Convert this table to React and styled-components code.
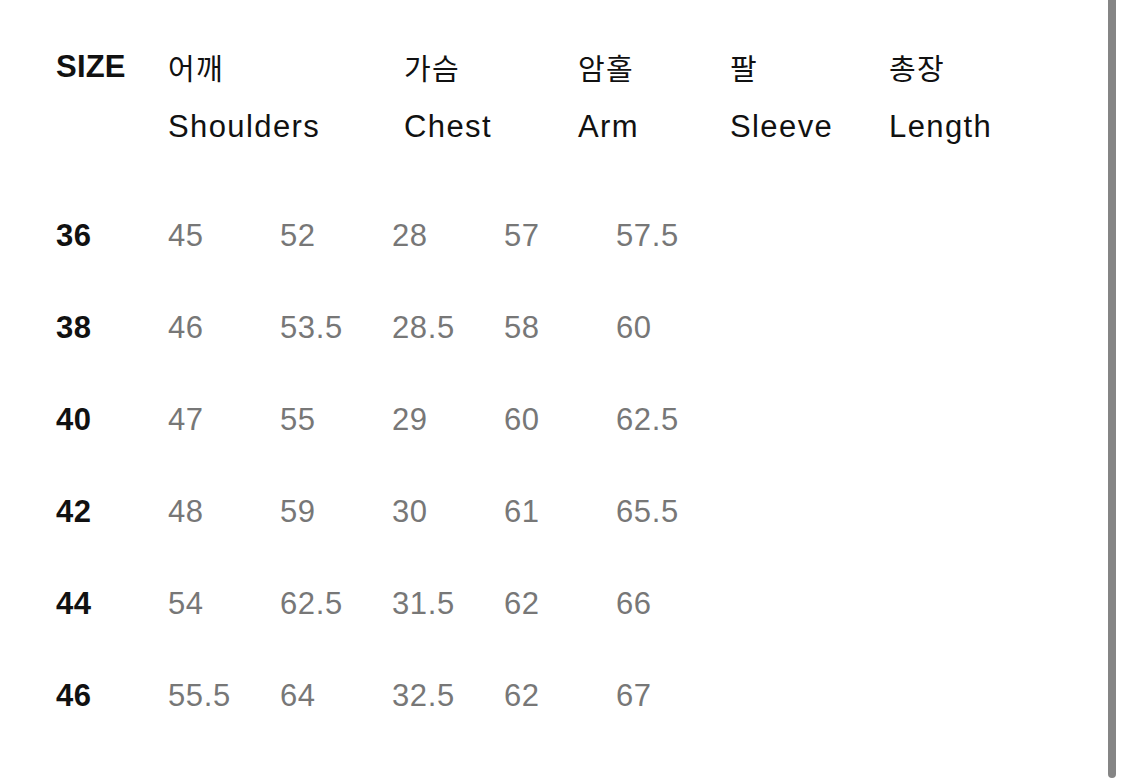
import React from "react";
import styled, { createGlobalStyle } from "styled-components";

const GlobalStyle = createGlobalStyle`
  body {
    margin: 0;
    background: #ffffff;
    font-family: "Liberation Sans", "Noto Sans CJK KR", sans-serif;
  }
`;

const Page = styled.div`
  position: relative;
  width: 1125px;
  height: 784px;
  overflow: hidden;
  padding-left: 56px;
  box-sizing: border-box;
`;

const Header = styled.div`
  display: grid;
  grid-template-columns: 112px 236px 174px 152px 159px auto;
  grid-auto-rows: 60px;
  padding-top: 37px;
  align-items: center;
  color: #111;
`;

const HeadCell = styled.div`
  line-height: 60px;
  white-space: nowrap;
  font-weight: ${({ $bold }) => ($bold ? 700 : 400)};
  letter-spacing: ${({ $bold }) => ($bold ? "0.2px" : "1.4px")};
  font-family: ${({ $ko }) =>
    $ko
      ? `"Noto Sans CJK KR", "Liberation Sans", sans-serif`
      : `"Liberation Sans", "Noto Sans CJK KR", sans-serif`};
  font-size: ${({ $ko }) => ($ko ? "29px" : "31px")};
`;

const Body = styled.div`
  margin-top: 33px;
  display: flex;
  flex-direction: column;
`;

const Row = styled.div`
  display: grid;
  grid-template-columns: repeat(6, 112px);
  height: 92px;
  align-items: center;
  font-size: 31px;
  letter-spacing: 0.6px;
`;

const Cell = styled.div`
  color: ${({ $size }) => ($size ? "#111" : "#777")};
  font-weight: ${({ $size }) => ($size ? 700 : 400)};
  white-space: nowrap;
`;

const Scrollbar = styled.div`
  position: absolute;
  top: -4px;
  left: 1108px;
  width: 8px;
  height: 782px;
  background: #858585;
  border-radius: 0 0 4px 4px;
`;

const heads = [
  ["SIZE", ""],
  ["어깨", "Shoulders"],
  ["가슴", "Chest"],
  ["암홀", "Arm"],
  ["팔", "Sleeve"],
  ["총장", "Length"],
];

const rows = [
  ["36", "45", "52", "28", "57", "57.5"],
  ["38", "46", "53.5", "28.5", "58", "60"],
  ["40", "47", "55", "29", "60", "62.5"],
  ["42", "48", "59", "30", "61", "65.5"],
  ["44", "54", "62.5", "31.5", "62", "66"],
  ["46", "55.5", "64", "32.5", "62", "67"],
];

const App = () => {
  return (
    <>
      <GlobalStyle />
      <Page>
        <Header>
          {heads.map(([ko], i) =>
            i === 0 ? (
              <HeadCell key={i} $bold>
                {ko}
              </HeadCell>
            ) : (
              <HeadCell key={i} $ko>
                {ko}
              </HeadCell>
            )
          )}
          {heads.map(([, en], i) => (
            <HeadCell key={"en" + i}>{en}</HeadCell>
          ))}
        </Header>
        <Body>
          {rows.map((r) => (
            <Row key={r[0]}>
              {r.map((v, i) => (
                <Cell key={i} $size={i === 0}>
                  {v}
                </Cell>
              ))}
            </Row>
          ))}
        </Body>
        <Scrollbar />
      </Page>
    </>
  );
};

export default App;
